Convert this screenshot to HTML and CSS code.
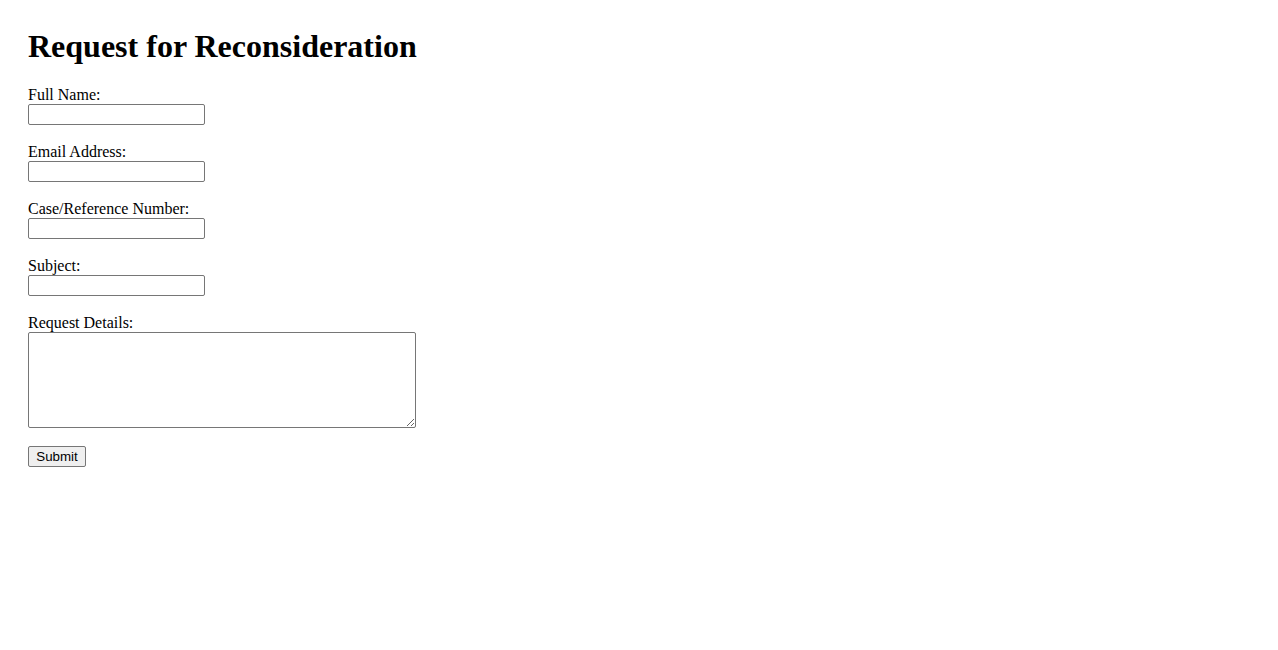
FILE: index.html
```html
<!DOCTYPE html>
<html>
<head>
<meta charset="utf-8">
<title>Request for Reconsideration</title>
<link rel="stylesheet" href="styles.css">
</head>
<body>
<div class="page">
  <h1 class="title">Request for Reconsideration</h1>
  <form class="form">
    <div class="group">
      <label class="label" for="name">Full Name:</label>
      <input class="field" id="name" type="text">
    </div>
    <div class="group">
      <label class="label" for="email">Email Address:</label>
      <input class="field" id="email" type="email">
    </div>
    <div class="group">
      <label class="label" for="case">Case/Reference Number:</label>
      <input class="field" id="case" type="text">
    </div>
    <div class="group">
      <label class="label" for="subject">Subject:</label>
      <input class="field" id="subject" type="text">
    </div>
    <div class="group">
      <label class="label" for="details">Request Details:</label>
      <textarea class="area" id="details"></textarea>
    </div>
    <button class="submit" type="submit">Submit</button>
  </form>
</div>
</body>
</html>
```

FILE: styles.css
```css
html, body {
  margin: 0;
  padding: 0;
  background: #ffffff;
}

body {
  font-family: "Liberation Serif", "Times New Roman", serif;
  font-size: 16px;
  color: #000000;
}

.page {
  padding: 28px 28px;
}

.title {
  margin: 0 0 21px 0;
  font-size: 32px;
  font-weight: bold;
  line-height: 37px;
}

.form {
  margin: 0;
}

.group {
  margin-bottom: 18px;
}

.label {
  display: block;
  line-height: 18px;
  height: 18px;
}

.field {
  display: block;
  box-sizing: border-box;
  width: 177px;
  height: 21px;
  margin: 0;
  padding: 1px 2px;
  border: 1px solid #767676;
  border-radius: 2px;
  background: #ffffff;
  font-family: "Liberation Sans", Arial, sans-serif;
  font-size: 13.33px;
}

.area {
  display: block;
  box-sizing: border-box;
  width: 388px;
  height: 96px;
  margin: 0;
  padding: 2px;
  border: 1px solid #767676;
  border-radius: 2px;
  background: #ffffff;
  font-family: "Liberation Mono", monospace;
  font-size: 13.33px;
}

.submit {
  display: block;
  box-sizing: border-box;
  width: 58px;
  height: 21px;
  margin: 0;
  padding: 1px 6px;
  border: 1px solid #767676;
  border-radius: 2px;
  background: #efefef;
  color: #000000;
  font-family: "Liberation Sans", Arial, sans-serif;
  font-size: 13.33px;
}
```
